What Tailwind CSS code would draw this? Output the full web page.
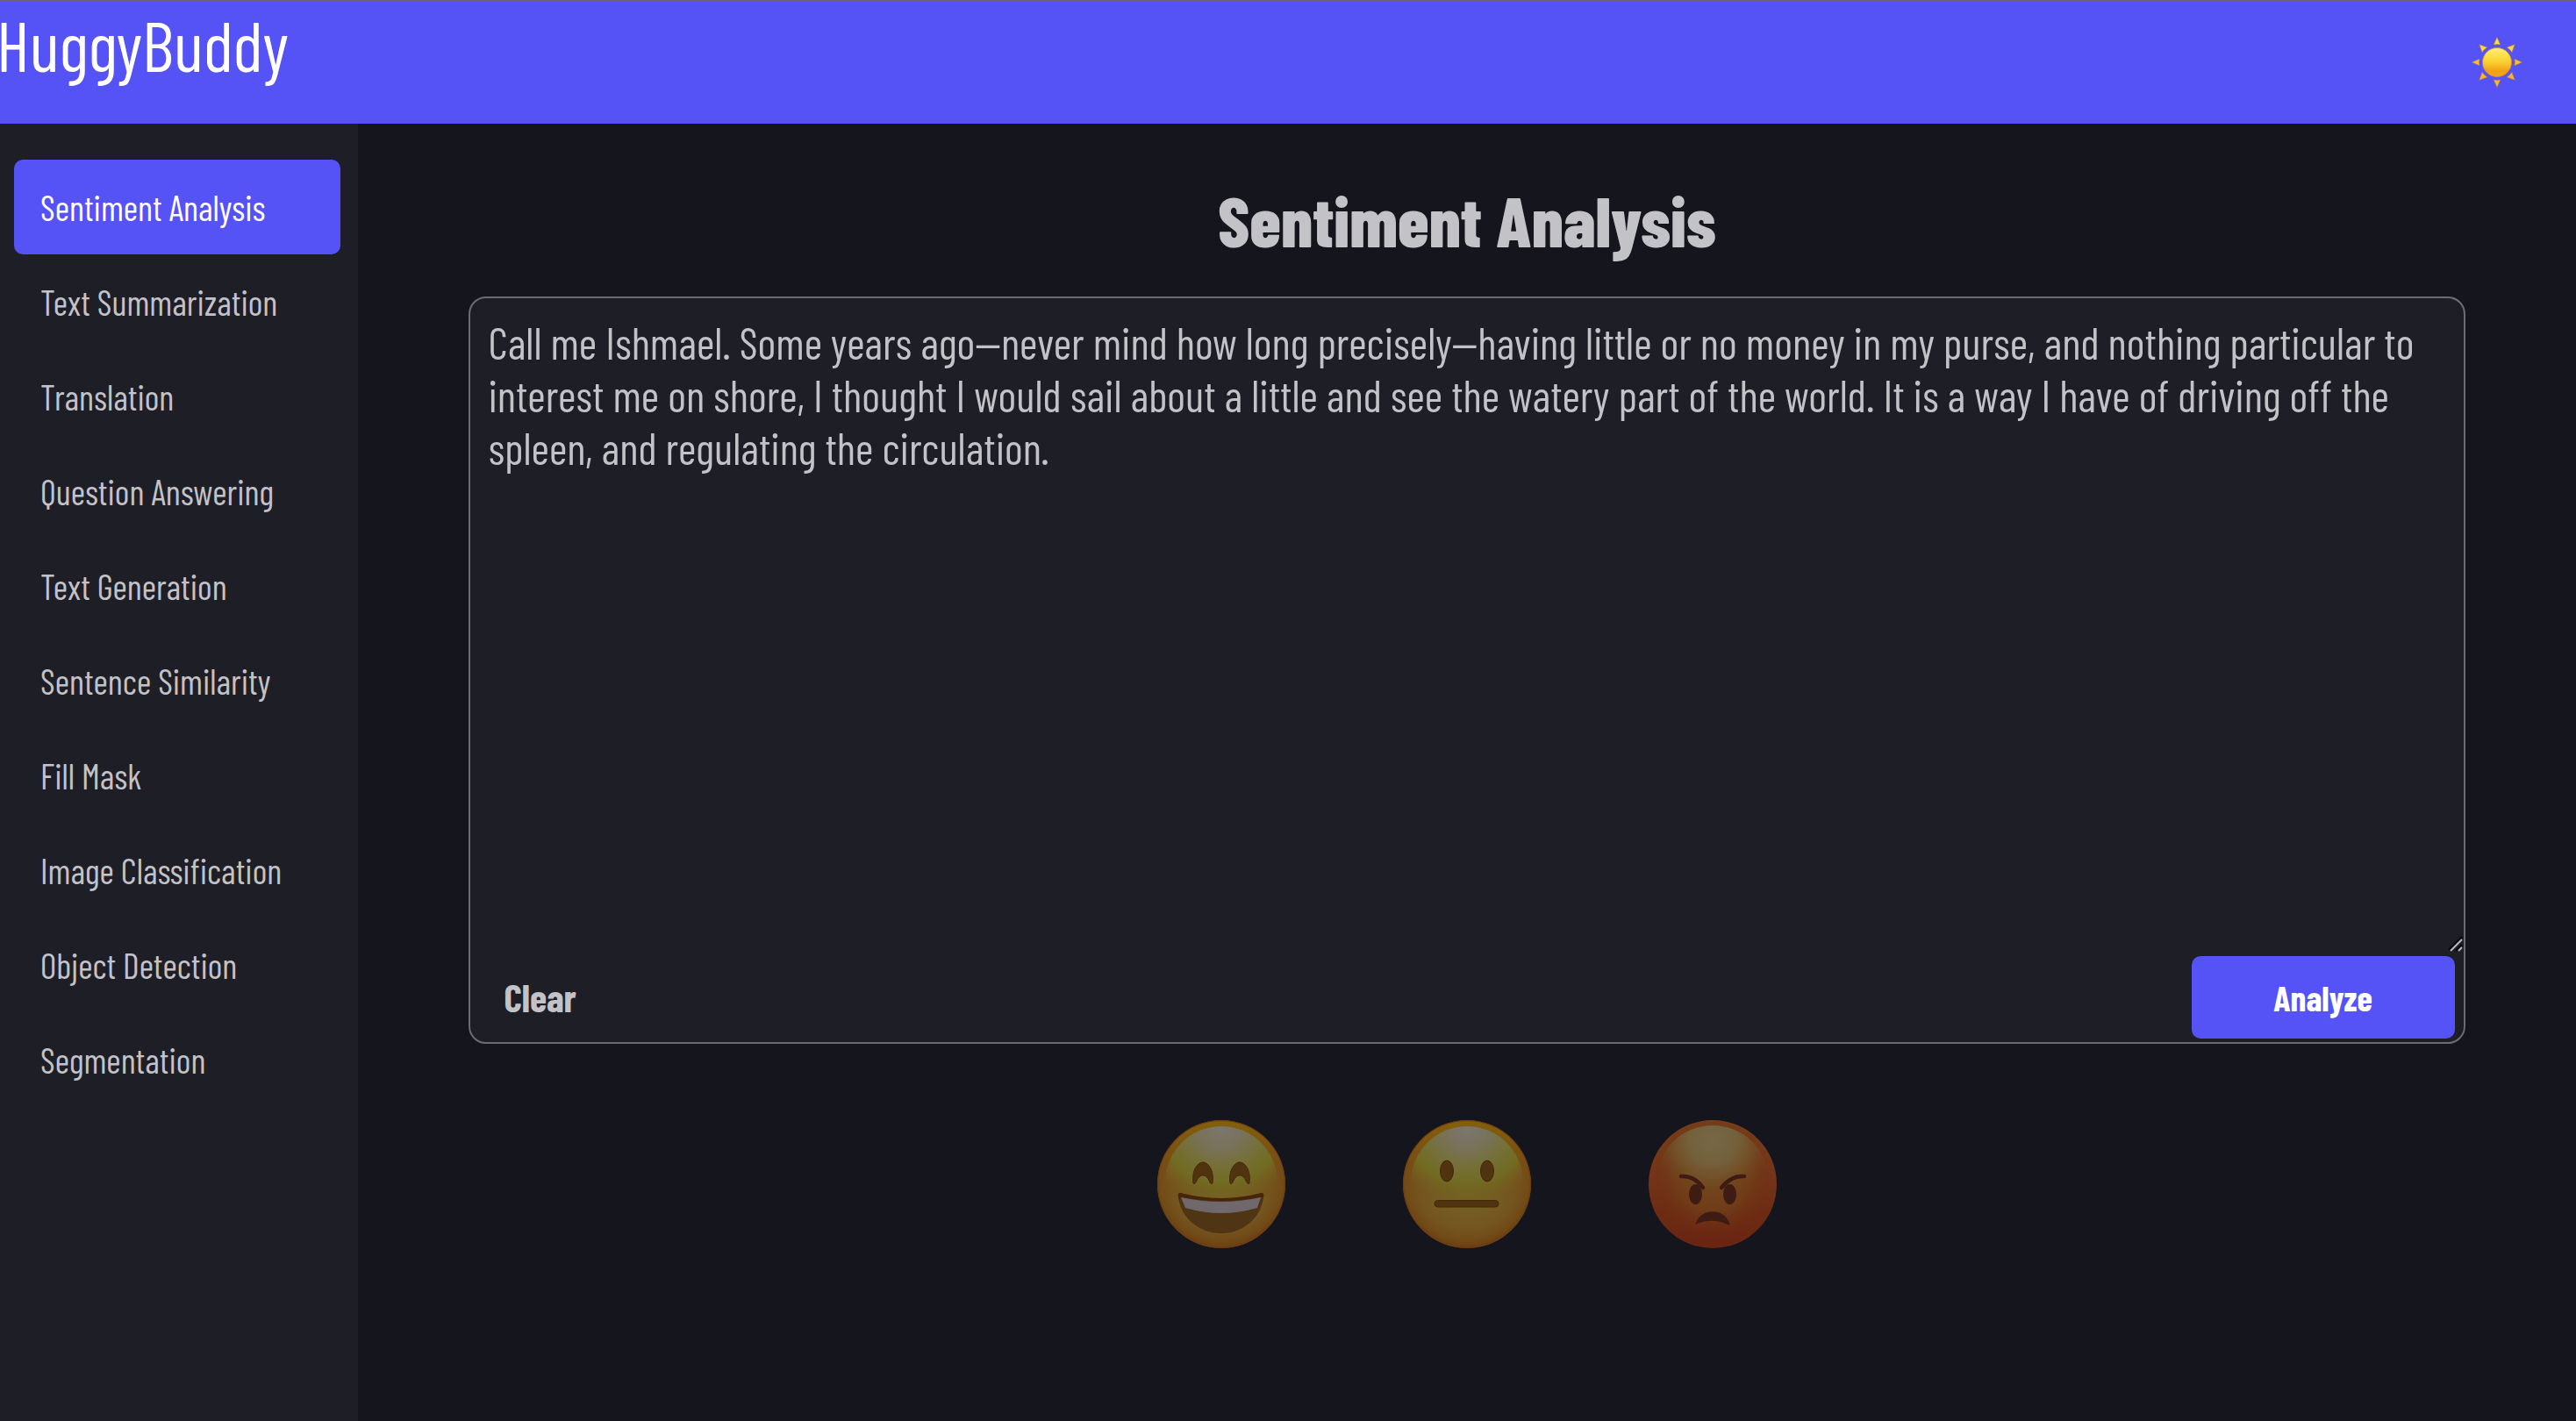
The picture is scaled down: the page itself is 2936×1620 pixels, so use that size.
<!DOCTYPE html>
<html lang="en">
<head>
<meta charset="utf-8">
<meta name="viewport" content="width=device-width, initial-scale=1">
<title>HuggyBuddy</title>
<script src="https://cdn.jsdelivr.net/npm/@tailwindcss/browser@4"></script>
</head>
<body class="flex min-h-screen flex-col border-t-2 border-[#66666b] bg-[#15151e] font-['Barlow_Condensed','Roboto_Condensed',sans-serif] text-[40px] leading-[48px] text-[#c3c2c7]">
  <header class="flex h-[139px] items-start justify-between bg-[#5552f6] pr-[60px] pb-0.5 text-white">
    <a href="#" class="-ml-1 text-[80px] leading-[96px]">HuggyBuddy</a>
    <button type="button" aria-label="Toggle theme" class="self-center">
      <svg class="size-[60px]" viewBox="-30 -30 60 60" aria-hidden="true">
        <defs>
          <linearGradient id="sun" x1="0" y1="0" x2="0" y2="1">
            <stop offset="0" stop-color="#fff08a"/><stop offset=".25" stop-color="#fde24a"/><stop offset=".55" stop-color="#f8c92c"/><stop offset=".8" stop-color="#f0a015"/><stop offset="1" stop-color="#f5a81c"/>
          </linearGradient>
        </defs>
        <circle r="16.5" fill="url(#sun)" stroke="#d58a35" stroke-width="1"/>
        <g stroke="#b8803f" stroke-width=".6">
          <path d="M0-28.500 3.800-20Q0-20.800-3.800-20Z" fill="#fde03c"/>
          <path d="M0-28.500 4-20Q0-20.800-4-20Z" fill="#fdd83a" transform="rotate(45)"/>
          <path d="M0-28.500 4-20Q0-20.800-4-20Z" fill="#fdd83a" transform="rotate(-45)"/>
          <path d="M0-28.500 3.800-20Q0-20.800-3.800-20Z" fill="#fbbf2c" transform="rotate(90)"/>
          <path d="M0-28.500 3.800-20Q0-20.800-3.800-20Z" fill="#fbbf2c" transform="rotate(-90)"/>
          <path d="M0-28.500 4-20Q0-20.800-4-20Z" fill="#fbb52c" transform="rotate(135)"/>
          <path d="M0-28.500 4-20Q0-20.800-4-20Z" fill="#fbb52c" transform="rotate(-135)"/>
          <path d="M0-28.500 3.800-20Q0-20.800-3.800-20Z" fill="#fbb52c" transform="rotate(180)"/>
        </g>
      </svg>
    </button>
  </header>

  <div class="flex grow">
    <nav aria-label="Tasks" class="w-[408px] shrink-0 bg-[#1e1e27] pt-[41px] pr-5 pl-4">
      <ul>
        <li><a href="#" aria-current="page" class="block rounded-[10px] bg-[#5552f6] p-[30px] text-white">Sentiment Analysis</a></li>
        <li><a href="#" class="block p-[30px]">Text Summarization</a></li>
        <li><a href="#" class="block p-[30px]">Translation</a></li>
        <li><a href="#" class="block p-[30px]">Question Answering</a></li>
        <li><a href="#" class="block p-[30px]">Text Generation</a></li>
        <li><a href="#" class="block p-[30px]">Sentence Similarity</a></li>
        <li><a href="#" class="block p-[30px]">Fill Mask</a></li>
        <li><a href="#" class="block p-[30px]">Image Classification</a></li>
        <li><a href="#" class="block p-[30px]">Object Detection</a></li>
        <li><a href="#" class="block p-[30px]">Segmentation</a></li>
      </ul>
    </nav>

    <main class="flex grow flex-col items-center pt-[61px]">
      <h1 class="text-[80px] leading-[96px] font-extrabold"><label for="text">Sentiment Analysis</label></h1>
      <form class="mt-10 w-9/10 rounded-[20px] border-2 border-[#6b6a75] bg-[#1e1e27]">
        <div class="relative">
          <textarea id="text" class="block h-[750px] w-full resize-none bg-transparent p-5 text-[50px] leading-[60px] outline-none">Call me Ishmael. Some years ago—never mind how long precisely—having little or no money in my purse, and nothing particular to interest me on shore, I thought I would sail about a little and see the watery part of the world. It is a way I have of driving off the spleen, and regulating the circulation.</textarea>
          <svg class="absolute right-0 bottom-1 size-5" viewBox="0 0 20 20" fill="none" aria-hidden="true">
            <path d="M3 17 18 2M11 18 18 11" stroke="#08080c" stroke-width="2"/>
            <path d="M5 18 18 5M14 18 18 14" stroke="#b8b8bc" stroke-width="2"/>
          </svg>
        </div>
        <div class="flex items-center justify-between pr-2.5 pb-1 pl-[18px]">
          <button type="button" class="px-5 text-[44px] leading-[52px] font-bold">Clear</button>
          <button type="button" class="w-[300px] rounded-[10px] bg-[#5552f6] py-[23px] font-bold text-white">Analyze</button>
        </div>
      </form>

      <div class="mt-[87px] flex gap-[134px]">
        <svg class="size-[146px]" viewBox="0 0 146 146" role="img" aria-label="Positive">
          <defs>
            <radialGradient id="face" gradientUnits="userSpaceOnUse" cx="73" cy="66" r="82">
              <stop offset="0" stop-color="#706822"/><stop offset=".4" stop-color="#746024"/><stop offset=".72" stop-color="#745520"/><stop offset=".88" stop-color="#714a16"/><stop offset="1" stop-color="#683a10"/>
            </radialGradient>
            <linearGradient id="rim" x1="0" y1="0" x2="0" y2="1">
              <stop offset="0" stop-color="#84600a"/><stop offset=".15" stop-color="#7f560e"/><stop offset=".4" stop-color="#784a14" stop-opacity=".6"/><stop offset=".65" stop-color="#784a14" stop-opacity="0"/>
            </linearGradient>
            <radialGradient id="shine" gradientUnits="userSpaceOnUse" cx="73" cy="10" r="86" gradientTransform="translate(73 0) scale(1.1 1) translate(-73 0)">
              <stop offset="0" stop-color="#7c766e"/><stop offset=".25" stop-color="#79725c"/><stop offset=".5" stop-color="#757038"/><stop offset=".72" stop-color="#726b22"/><stop offset="1" stop-color="#746022" stop-opacity="0"/>
            </radialGradient>
          </defs>
          <circle cx="73" cy="73" r="73" fill="url(#face)"/>
          <circle cx="73" cy="73" r="72.500" fill="url(#rim)" stroke="#6e3c12" stroke-width="1"/>
          <ellipse cx="73" cy="71" rx="64" ry="64" fill="url(#shine)"/>
          <path d="M41 72C39 57 46 48 52 48S65 57 63 72Q61 74 59 69C56 61 48 61 45 69Q43 74 41 72ZM83 72C81 57 88 48 94 48S107 57 105 72Q103 74 101 69C98 61 90 61 87 69Q85 74 83 72Z" fill="#50330f" stroke="#46290b" stroke-width="1"/>
          <path d="M26 83Q73 95 119 83Q122 83 121 88C118 112 98 129 73 129S27 112 24 88Q23 83 26 83Z" fill="#503514"/>
          <path d="M26 83Q73 95 119 83Q122 83 121 88L118 88Q73 96 28 88L25 91 24 88Q23 83 26 83Z" fill="#462508"/>
          <path d="M27 88Q73 98 118 88L114 100Q73 112 32 100Z" fill="#6f696e"/>
        </svg>
        <svg class="size-[146px]" viewBox="0 0 146 146" role="img" aria-label="Neutral">
          <circle cx="73" cy="73" r="73" fill="url(#face)"/>
          <circle cx="73" cy="73" r="72.500" fill="url(#rim)" stroke="#6e3c12" stroke-width="1"/>
          <ellipse cx="73" cy="71" rx="64" ry="64" fill="url(#shine)"/>
          <g fill="#503410" stroke="#42280b" stroke-width="1">
            <ellipse cx="50" cy="58" rx="7.500" ry="12"/>
            <ellipse cx="96" cy="58" rx="7.500" ry="12"/>
            <rect x="36" y="91.500" width="73" height="7.500" rx="3.700"/>
          </g>
        </svg>
        <svg class="size-[146px]" viewBox="0 0 146 146" role="img" aria-label="Negative">
          <defs>
            <linearGradient id="anger" x1="0" y1="0" x2="0" y2="1">
              <stop offset="0" stop-color="#7a401a"/><stop offset=".4" stop-color="#733619"/><stop offset=".7" stop-color="#6e2c14"/><stop offset="1" stop-color="#6a2412"/>
            </linearGradient>
            <radialGradient id="angerGlow" cx=".5" cy=".42" r=".5">
              <stop offset="0" stop-color="#724a20"/><stop offset=".6" stop-color="#703f19" stop-opacity=".8"/><stop offset="1" stop-color="#6e2c12" stop-opacity="0"/>
            </radialGradient>
            <radialGradient id="angerShine" gradientUnits="userSpaceOnUse" cx="73" cy="24" r="62" gradientTransform="translate(73 0) scale(1.1 1) translate(-73 0)">
              <stop offset="0" stop-color="#766846"/><stop offset=".4" stop-color="#74613c"/><stop offset=".65" stop-color="#73552c" stop-opacity=".8"/><stop offset="1" stop-color="#72451c" stop-opacity="0"/>
            </radialGradient>
          </defs>
          <circle cx="73" cy="73" r="73" fill="url(#anger)"/>
          <circle cx="73" cy="73" r="72" fill="url(#angerGlow)"/>
          <ellipse cx="73" cy="70" rx="64" ry="64" fill="url(#angerShine)"/>
          <g fill="#3f1c13">
            <ellipse cx="53.500" cy="84.500" rx="7.500" ry="11.500"/>
            <ellipse cx="92.500" cy="84.500" rx="7.500" ry="11.500"/>
            <path d="M55 118Q53 120 54 117C60 100 86 100 92 117Q93 120 90 119Q73 111 55 118Z"/>
          </g>
          <path d="M37 64Q52 63 62 77M109 64Q94 63 83 77" fill="none" stroke="#3f1c13" stroke-width="4.500" stroke-linecap="round"/>
        </svg>
      </div>
    </main>
  </div>
</body>
</html>
